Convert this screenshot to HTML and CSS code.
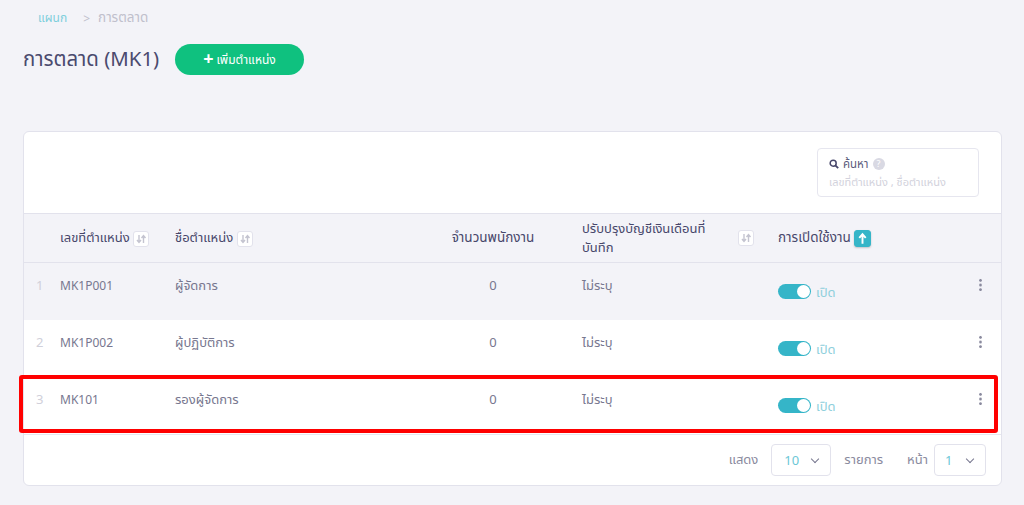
FILE: index.html
```html
<!DOCTYPE html>
<html lang="th">

<head>
  <meta charset="UTF-8">
  <meta name="viewport" content="width=device-width, initial-scale=1.0">
  <title>การตลาด (MK1)</title>
  <link rel="stylesheet" href="styles.css">
</head>

<body>
  <nav class="crumbs">
    <a class="crumb-link">แผนก</a>
    <span class="crumb-sep">&gt;</span>
    <span class="crumb-here">การตลาด</span>
  </nav>

  <div class="page-head">
    <h1 class="page-title">การตลาด (MK1)</h1>
    <button class="btn-add"><span class="btn-plus">+</span>เพิ่มตำแหน่ง</button>
  </div>

  <section class="card">
    <div class="card-top">
      <div class="search-box">
        <div class="search-label">
          <svg class="search-icon" viewBox="0 0 12 12">
            <circle cx="5" cy="5" r="3.6" fill="none" stroke="#47476b" stroke-width="1.8" />
            <path d="M7.6 7.6 L11 11" stroke="#47476b" stroke-width="2.2" />
          </svg>
          ค้นหา
          <span class="help-dot">?</span>
        </div>
        <div class="search-hint">เลขที่ตำแหน่ง , ชื่อตำแหน่ง</div>
      </div>
    </div>

    <div class="row row-head">
      <div class="col-no"></div>
      <div class="col-code">เลขที่ตำแหน่ง
        <span class="sort-btn"><svg viewBox="0 0 14 14"><path d="M5 3v7M3 8l2 2.5L7 8M9.500 11V4M7.500 6l2-2.500L11.500 6" /></svg></span>
      </div>
      <div class="col-name">ชื่อตำแหน่ง
        <span class="sort-btn"><svg viewBox="0 0 14 14"><path d="M5 3v7M3 8l2 2.5L7 8M9.500 11V4M7.500 6l2-2.500L11.500 6" /></svg></span>
      </div>
      <div class="col-count col-wide">จำนวนพนักงาน</div>
      <div class="col-payroll">
        <span class="payroll-text">ปรับปรุงบัญชีเงินเดือนที่บันทึก</span>
        <span class="sort-btn"><svg viewBox="0 0 14 14"><path d="M5 3v7M3 8l2 2.5L7 8M9.500 11V4M7.500 6l2-2.500L11.500 6" /></svg></span>
      </div>
      <div class="col-active col-wide">การเปิดใช้งาน
        <span class="sort-btn sort-on"><svg viewBox="0 0 14 14"><path d="M7 12V3.500M4 6.500l3-3.500 3 3.500" /></svg></span>
      </div>
      <div class="col-more"></div>
    </div>

    <div class="row row-grey">
      <div class="col-no">1</div>
      <div class="col-code code-text">MK1P001</div>
      <div class="col-name">ผู้จัดการ</div>
      <div class="col-count">0</div>
      <div class="col-payroll">ไม่ระบุ</div>
      <div class="col-active"><span class="toggle"></span><span class="toggle-text">เปิด</span></div>
      <div class="col-more"><span class="dots"></span></div>
    </div>

    <div class="row">
      <div class="col-no">2</div>
      <div class="col-code code-text">MK1P002</div>
      <div class="col-name">ผู้ปฏิบัติการ</div>
      <div class="col-count">0</div>
      <div class="col-payroll">ไม่ระบุ</div>
      <div class="col-active"><span class="toggle"></span><span class="toggle-text">เปิด</span></div>
      <div class="col-more"><span class="dots"></span></div>
    </div>

    <div class="row row-marked">
      <div class="col-no">3</div>
      <div class="col-code code-text">MK101</div>
      <div class="col-name">รองผู้จัดการ</div>
      <div class="col-count">0</div>
      <div class="col-payroll">ไม่ระบุ</div>
      <div class="col-active"><span class="toggle"></span><span class="toggle-text">เปิด</span></div>
      <div class="col-more"><span class="dots"></span></div>
    </div>

    <div class="card-foot">
      <span class="foot-text">แสดง</span>
      <div class="pick pick-size"><span>10</span><span class="chev"></span></div>
      <span class="foot-text foot-items">รายการ</span>
      <span class="foot-text foot-page">หน้า</span>
      <div class="pick pick-page"><span>1</span><span class="chev"></span></div>
    </div>
  </section>
</body>

</html>
```

FILE: styles.css
```css
* {
  margin: 0;
  padding: 0;
  box-sizing: border-box;
}

body {
  height: 505px;
  overflow: hidden;
  padding: 10px 22px 0 23px;
  background: #f3f3f8;
  color: #47476b;
  font-family: "Noto Sans", "Noto Sans Thai", "Noto Sans CJK SC", sans-serif;
  font-size: 13px;
}

.crumbs {
  display: flex;
  align-items: center;
  height: 16px;
  padding-left: 15px;
  font-size: 12px;
  color: #c0c0cc;
}

.crumb-link {
  color: #7fcfdc;
}

.crumb-sep {
  margin: 0 8px 0 16px;
}

.crumb-here {
  font-size: 13.5px;
}

.page-head {
  display: flex;
  align-items: center;
  height: 31px;
  margin-top: 18px;
}

.page-title {
  width: 152px;
  font-size: 20.4px;
  font-weight: 400;
  white-space: nowrap;
  color: #4a4a6e;
}

.btn-add {
  width: 129px;
  height: 31px;
  border: none;
  border-radius: 16px;
  background: #0fc17f;
  color: #fff;
  font: inherit;
  font-size: 12px;
}

.btn-plus {
  margin-right: 3px;
  font-size: 18px;
  font-weight: 700;
  line-height: 12px;
  vertical-align: -1px;
}

.card {
  margin-top: 56px;
  height: 355px;
  border: 1px solid #e2e2ec;
  border-radius: 6px;
  background: #fff;
}

.card-top {
  display: flex;
  justify-content: flex-end;
  height: 81px;
  padding: 16px 22px 0 0;
}

.search-box {
  width: 162px;
  height: 49px;
  padding: 5px 11px;
  border: 1px solid #e6e6ef;
  border-radius: 4px;
}

.search-label {
  display: flex;
  align-items: center;
  height: 20px;
  gap: 4px;
  font-size: 11.5px;
  color: #5b5b7b;
}

.search-icon {
  width: 10px;
  height: 10px;
}

.help-dot {
  width: 12px;
  height: 12px;
  border-radius: 50%;
  background: #d9d9e3;
  color: #fff;
  font-size: 9px;
  line-height: 12px;
  text-align: center;
}

.search-hint {
  font-size: 11px;
  white-space: nowrap;
  color: #d2d2dc;
}

.row {
  display: flex;
  align-items: flex-start;
  height: 57px;
  padding-top: 13px;
  color: #77778f;
}

.row-head {
  align-items: center;
  height: 50px;
  padding-top: 0;
  border-top: 1px solid #e2e2ec;
  border-bottom: 1px solid #e2e2ec;
  background: #f3f3f8;
  color: #47476b;
}

.row-grey {
  background: #f3f3f8;
}

.row-marked {
  position: relative;
}

.row-marked::after {
  content: "";
  box-sizing: border-box;
  position: absolute;
  left: -5px;
  right: 3px;
  top: -2px;
  height: 58px;
  border: 4px solid #f00;
  border-radius: 3px;
}

.col-no {
  width: 36px;
  padding-left: 12px;
  color: #d0d0da;
}

.col-code {
  width: 115px;
  white-space: nowrap;
}

.code-text {
  padding-top: 1px;
  font-size: 12px;
}

.col-name {
  width: 245px;
  white-space: nowrap;
}

.col-count {
  width: 162px;
  padding-right: 16px;
  text-align: center;
  white-space: nowrap;
}

.col-wide {
  font-size: 13.5px;
}

.col-payroll {
  display: flex;
  align-items: center;
  justify-content: space-between;
  width: 172px;
}

.payroll-text {
  width: 130px;
  line-height: 19px;
}

.col-active {
  display: flex;
  align-items: flex-start;
  width: 220px;
  padding-left: 24px;
  gap: 5px;
  white-space: nowrap;
}

.row-head .col-active {
  align-items: center;
}

.col-more {
  width: 20px;
}

.sort-btn {
  display: inline-block;
  width: 16px;
  height: 16px;
  border: 1px solid #e2e2ec;
  border-radius: 3px;
  background: #fff;
  vertical-align: middle;
}

.sort-btn svg {
  display: block;
  width: 14px;
  height: 14px;
  fill: none;
  stroke: #c4c4d0;
  stroke-width: 1.4;
}

.sort-on {
  width: 17px;
  height: 17px;
  margin-left: -2px;
  border-color: #35b5c8;
  background: #35b5c8;
  box-shadow: 0 1px 2px rgba(0, 0, 0, 0.2);
}

.sort-on svg {
  width: 15px;
  height: 15px;
  stroke: #fff;
  stroke-width: 1.8;
}

.toggle {
  position: relative;
  display: inline-block;
  flex: none;
  width: 33px;
  height: 15px;
  margin-top: 8px;
  border-radius: 8px;
  background: #35b5c8;
}

.toggle::after {
  content: "";
  position: absolute;
  right: 1px;
  top: 1px;
  width: 13px;
  height: 13px;
  border-radius: 50%;
  background: #fff;
}

.toggle-text {
  margin-top: 7px;
  color: #8fcfdc;
}

.dots {
  display: block;
  width: 3px;
  height: 13px;
  margin: 2px 0 0 5px;
  background: radial-gradient(circle at center, #8a8a9e 1.2px, transparent 1.5px) 0 0 / 3px 4.7px;
}

.card-foot {
  display: flex;
  align-items: center;
  justify-content: flex-end;
  height: 52px;
  padding: 0 15px 1px 0;
  border-top: 1px solid #e6e6ef;
  color: #8a8a9e;
}

.foot-items {
  margin-left: 13px;
}

.foot-page {
  margin-left: 24px;
}

.pick {
  display: flex;
  align-items: center;
  justify-content: space-between;
  height: 32px;
  border: 1px solid #e2e2ec;
  border-radius: 4px;
  padding: 0 12px;
  color: #6cc7d6;
  font-size: 13px;
}

.pick-size {
  width: 60px;
  margin-left: 13px;
}

.pick-page {
  width: 52px;
  margin-left: 6px;
  padding-left: 10px;
}

.chev {
  width: 6px;
  height: 6px;
  margin-bottom: 3px;
  border-right: 1.5px solid #77778f;
  border-bottom: 1.5px solid #77778f;
  transform: rotate(45deg);
}
```
